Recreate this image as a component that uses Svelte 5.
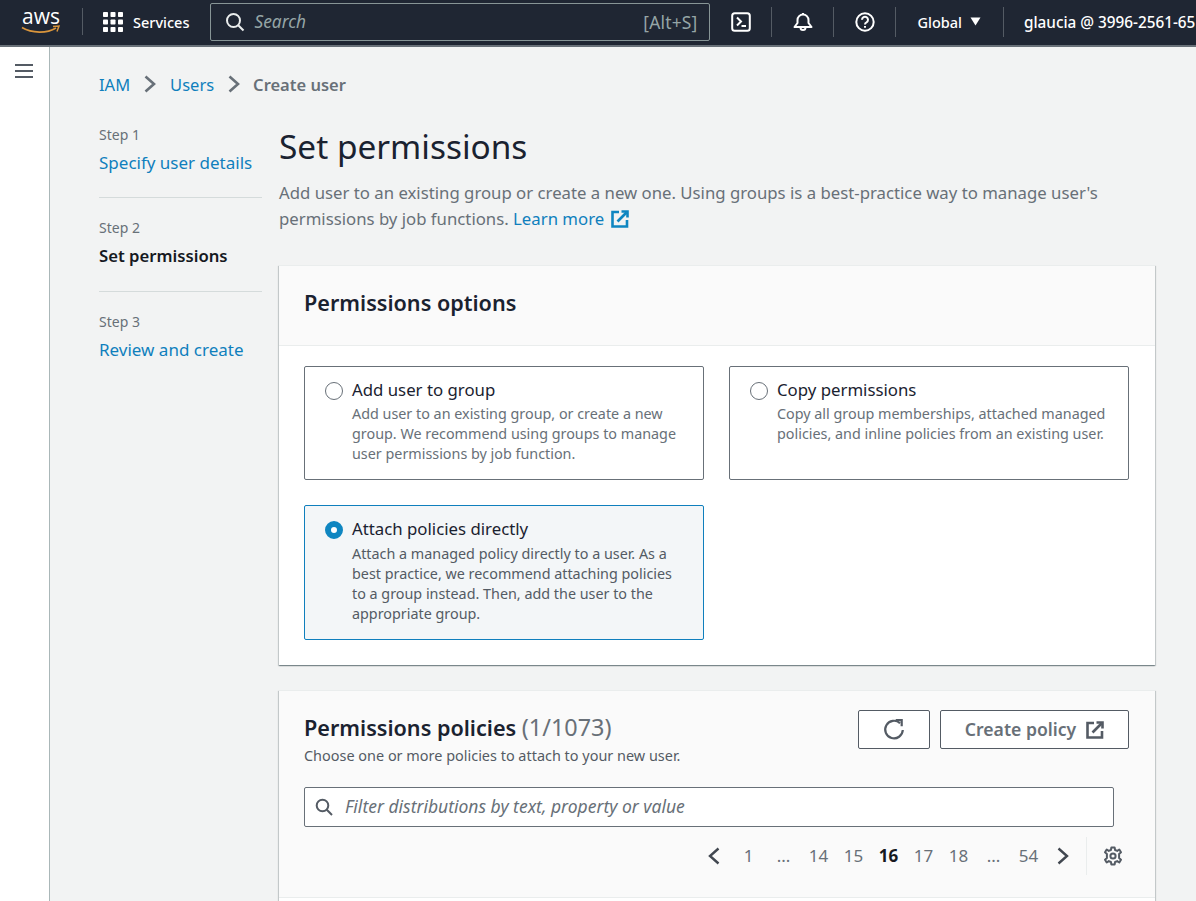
<script>
  const steps = [
    { label: "Step 1", name: "Specify user details", state: "link" },
    { label: "Step 2", name: "Set permissions", state: "current" },
    { label: "Step 3", name: "Review and create", state: "link" }
  ];

  const options = [
    {
      title: "Add user to group",
      text: "Add user to an existing group, or create a new group. We recommend using groups to manage user permissions by job function."
    },
    {
      title: "Copy permissions",
      text: "Copy all group memberships, attached managed policies, and inline policies from an existing user."
    },
    {
      title: "Attach policies directly",
      text: "Attach a managed policy directly to a user. As a best practice, we recommend attaching policies to a group instead. Then, add the user to the appropriate group.",
      selected: true
    }
  ];

  const pages = ["1", "...", "14", "15", "16", "17", "18", "...", "54"];
</script>

<div class="page">
  <header class="topbar">
    <div class="logo">
      <span class="logo-word">aws</span>
      <svg class="smile" width="40" height="10" viewBox="0 0 40 10">
        <path d="M1 2.5C11 8.5 26 8.5 35 3" fill="none" stroke="#d9953c" stroke-width="1.8" />
        <path d="M32 1.5 L38 1 L36 6.5" fill="none" stroke="#d9953c" stroke-width="1.5" />
      </svg>
    </div>
    <span class="sep first"></span>
    <svg class="grid-icon" width="20" height="20" viewBox="0 0 20 20" fill="#fff">
      {#each [0, 7.5, 15] as y}
        {#each [0, 7.5, 15] as x}
          <rect x={x} y={y} width="5" height="5" rx="0.8" />
        {/each}
      {/each}
    </svg>
    <span class="services">Services</span>

    <div class="search">
      <svg width="20" height="20" viewBox="0 0 20 20" fill="none" stroke="#eaeded" stroke-width="2">
        <circle cx="8.5" cy="8.5" r="6.5" />
        <path d="M13.2 13.2 L18.5 18.5" />
      </svg>
      <span class="search-text">Search</span>
      <span class="shortcut">[Alt+S]</span>
    </div>

    <svg class="tb-icon cloudshell" width="20" height="20" viewBox="0 0 20 20" fill="none" stroke="#fff" stroke-width="2">
      <rect x="1.2" y="1.2" width="17.6" height="17.6" rx="2.5" />
      <path d="M6 5.5 L10 9.5 L6 13.5" />
      <path d="M10.5 14 H15" />
    </svg>
    <span class="sep s1"></span>
    <svg class="tb-icon bell" width="20" height="20" viewBox="0 0 20 20" fill="none" stroke="#fff" stroke-width="2">
      <path d="M1.5 15 H18.5 L15.5 11 V8 A5.5 5.5 0 0 0 4.5 8 V11 Z" stroke-linejoin="round" />
      <path d="M10 1 V2.5" />
      <path d="M7.5 15.5 A2.5 2.5 0 0 0 12.5 15.5" />
    </svg>
    <span class="sep s2"></span>
    <svg class="tb-icon help" width="20" height="20" viewBox="0 0 20 20" fill="none" stroke="#fff" stroke-width="2">
      <circle cx="10" cy="10" r="8.7" />
      <path d="M7 7.8 A3 3 0 1 1 11.5 10.4 C10.4 11 10 11.4 10 12.6" />
      <path d="M10 14 V15.8" />
    </svg>
    <span class="sep s3"></span>
    <span class="region">Global</span>
    <svg class="caret" width="11" height="9" viewBox="0 0 11 9" fill="#fff"><path d="M0.5 0.5 H10.5 L5.5 8.5 Z" /></svg>
    <span class="sep s4"></span>
    <span class="account">glaucia @ 3996-2561-65</span>
  </header>

  <div class="body">
    <aside class="rail">
      <svg width="18" height="16" viewBox="0 0 18 16" stroke="#545b64" stroke-width="2">
        <path d="M0 2 H18 M0 8 H18 M0 14 H18" />
      </svg>
    </aside>

    <main class="main">
      <nav class="crumbs">
        <a href="#iam">IAM</a>
        <svg width="12" height="18" viewBox="0 0 12 18" fill="none" stroke="#687078" stroke-width="2.6"><path d="M1.5 1.5 L10 9 L1.5 16.5" /></svg>
        <a href="#users">Users</a>
        <svg width="12" height="18" viewBox="0 0 12 18" fill="none" stroke="#687078" stroke-width="2.6"><path d="M1.5 1.5 L10 9 L1.5 16.5" /></svg>
        <span class="crumb-current">Create user</span>
      </nav>

      <div class="columns">
        <ol class="steps">
          {#each steps as step}
            <li>
              <small>{step.label}</small>
              {#if step.state === "link"}
                <a href="#step">{step.name}</a>
              {:else}
                <strong>{step.name}</strong>
              {/if}
            </li>
          {/each}
        </ol>

        <section class="content">
          <h1>Set permissions</h1>
          <p class="lead">
            Add user to an existing group or create a new one. Using groups is a best-practice way to manage user's
            permissions by job functions. <a href="#learn">Learn more</a>
            <svg class="learn-icon" width="18" height="18" viewBox="0 0 18 18" fill="none" stroke="#0f86c1" stroke-width="2.6">
              <path d="M8 2 H1.5 V16.5 H16 V10" />
              <path d="M6.5 11.5 L15.5 2.5" />
              <path d="M10.5 1.5 H16.5 V7.5" />
            </svg>
          </p>

          <div class="panel options-panel">
            <div class="panel-head">
              <h2>Permissions options</h2>
            </div>
            <div class="tiles">
              {#each options as opt}
                <div class="tile" class:selected={opt.selected}>
                  <span class="radio"></span>
                  <div class="tile-text">
                    <div class="tile-title">{opt.title}</div>
                    <div class="tile-desc">{opt.text}</div>
                  </div>
                </div>
              {/each}
            </div>
          </div>

          <div class="panel policies-panel">
            <div class="policies-head">
              <div class="policies-top">
                <div class="policies-title">
                  <h2>Permissions policies <span class="count">(1/1073)</span></h2>
                  <p class="policies-sub">Choose one or more policies to attach to your new user.</p>
                </div>
                <div class="actions">
                  <button class="btn refresh" aria-label="Refresh">
                    <svg width="22" height="22" viewBox="0 0 20 20" fill="none" stroke="#545b64" stroke-width="2">
                      <path d="M15.5 3.8 A8 8 0 1 0 18 10" />
                      <path d="M11.5 1 H17 V6.5" />
                    </svg>
                  </button>
                  <button class="btn create">
                    <span class="btn-label">Create policy</span>
                    <svg width="18" height="18" viewBox="0 0 18 18" fill="none" stroke="#545b64" stroke-width="2.6">
                      <path d="M8 2 H1.5 V16.5 H16 V10" />
                      <path d="M6.5 11.5 L15.5 2.5" />
                      <path d="M10.5 1.5 H16.5 V7.5" />
                    </svg>
                  </button>
                </div>
              </div>

              <div class="filter">
                <svg width="18" height="18" viewBox="0 0 18 18" fill="none" stroke="#545b64" stroke-width="2">
                  <circle cx="7.5" cy="7.5" r="5.8" />
                  <path d="M11.8 11.8 L17 17" />
                </svg>
                <span class="filter-text">Filter distributions by text, property or value</span>
              </div>

              <div class="pager">
                <svg class="chev prev" width="14" height="18" viewBox="0 0 14 18" fill="none" stroke="#414750" stroke-width="2.4"><path d="M11.5 1.5 L3 9 L11.5 16.5" /></svg>
                {#each pages as p}
                  <span class="pg" class:now={p === "16"} class:dots={p === "..."}>{p}</span>
                {/each}
                <svg class="chev next" width="14" height="18" viewBox="0 0 14 18" fill="none" stroke="#414750" stroke-width="2.4"><path d="M2.5 1.5 L11 9 L2.5 16.5" /></svg>
                <span class="pager-sep"></span>
                <svg class="gear" width="20" height="20" viewBox="0 0 20 20" fill="none" stroke="#545b64" stroke-width="2">
                  <circle cx="10" cy="10" r="2.6" />
                  <path d="M8.4 1.5 H11.6 L12.1 4 L14.2 4.9 L16.3 3.5 L18 6.2 L16.1 7.9 L16.1 12.1 L18 13.8 L16.3 16.5 L14.2 15.1 L12.1 16 L11.6 18.5 H8.4 L7.9 16 L5.8 15.1 L3.7 16.5 L2 13.8 L3.9 12.1 L3.9 7.9 L2 6.2 L3.7 3.5 L5.8 4.9 L7.9 4 Z" stroke-linejoin="round" />
                </svg>
              </div>
            </div>
          </div>
        </section>
      </div>
    </main>
  </div>
</div>

<style>
  :global(body) {
    margin: 0;
    background: #f2f3f3;
  }

  .page {
    width: 1196px;
    height: 901px;
    overflow: hidden;
    font-family: "Noto Sans", "Open Sans", sans-serif;
    color: #16191f;
    display: flex;
    flex-direction: column;
  }

  a {
    color: #0f7fbd;
    text-decoration: none;
  }

  /* top bar */
  .topbar {
    flex: none;
    height: 43px;
    padding-bottom: 2px;
    background: #1f2633;
    border-bottom: 2px solid #687078;
    display: flex;
    align-items: center;
    white-space: nowrap;
    color: #fff;
    overflow: hidden;
    font-size: 14.5px;
  }

  .logo {
    flex: none;
    width: 40px;
    margin-left: 21px;
    display: flex;
    flex-direction: column;
    align-items: center;
    height: 34px;
  }

  .logo-word {
    font: 500 21px/22px "Open Sans", sans-serif;
  }

  .smile {
    margin-top: -2px;
  }

  .sep {
    flex: none;
    width: 1px;
    height: 30px;
    background: #545b64;
  }

  .first { margin-left: 21px; height: 27px; }
  .grid-icon { margin-left: 20px; flex: none; }
  .services { margin-left: 10px; font-weight: 500; }

  .search {
    flex: none;
    margin-left: 21px;
    width: 472px;
    height: 36px;
    border: 1px solid #879596;
    border-radius: 2px;
    display: flex;
    align-items: center;
    padding: 0 12px 0 14px;
  }

  .search-text {
    margin-left: 9px;
    font-style: italic;
    font-size: 17.3px;
    color: #95a5a6;
  }

  .shortcut {
    margin-left: auto;
    font-size: 17.4px;
    letter-spacing: 0.2px;
    color: #95a5a6;
  }

  .tb-icon { flex: none; }
  .cloudshell { margin-left: 21px; }
  .s1 { margin-left: 20px; }
  .bell { margin-left: 21px; }
  .s2 { margin-left: 20px; }
  .help { margin-left: 21px; }
  .s3 { margin-left: 20px; }
  .region { margin-left: 21px; font-weight: 500; }
  .caret { margin-left: 8px; flex: none; }
  .s4 { margin-left: 22px; }
  .account { margin-left: 20px; font-weight: 500; font-size: 15.3px; }

  .body {
    flex: 1;
    display: flex;
    min-height: 0;
  }

  .rail {
    flex: none;
    width: 50px;
    background: #fff;
    border-right: 1px solid #aab7b8;
    padding: 16px 0 0 15px;
    box-sizing: border-box;
  }

  .rail svg { display: block; }

  .main {
    flex: 1;
    padding: 24px 41px 0 49px;
    min-width: 0;
  }

  /* breadcrumb */
  .crumbs {
    display: flex;
    align-items: center;
    font-size: 16.5px;
    height: 26px;
  }

  .crumbs svg { margin: 0 14px; }
  .crumbs svg + a + svg { margin-right: 13px; }
  .crumb-current { color: #687078; font-weight: 600; }

  .columns {
    display: flex;
    margin-top: 27px;
  }

  /* wizard steps */
  .steps {
    flex: none;
    width: 163px;
    margin: 0 17px 0 0;
    padding: 0;
    list-style: none;
  }

  .steps li {
    height: 74px;
    box-sizing: border-box;
    border-bottom: 1px solid #d5dbdb;
    display: flex;
    flex-direction: column;
  }

  .steps li:last-child { border-bottom: 0; }
  .steps li + li { margin-top: 19px; }
  .steps li:nth-child(2) { height: 75px; }

  .steps small {
    font-size: 14px;
    line-height: 22px;
    color: #687078;
  }

  .steps a, .steps strong {
    font-size: 17px;
    line-height: 34px;
    white-space: nowrap;
  }

  .steps strong { font-weight: 600; font-size: 16.7px; }

  .content {
    flex: 1;
    min-width: 0;
  }

  h1 {
    margin: 0;
    font-size: 33.4px;
    font-weight: 400;
    line-height: 44px;
    padding-bottom: 2px;
    color: #1a2230;
  }

  .lead {
    margin: 10px 0 0;
    font-size: 16.75px;
    line-height: 26px;
    color: #687078;
    max-width: 830px;
  }

  .learn-icon { vertical-align: -3px; margin-left: 2px; }

  /* panels */
  .panel {
    background: #fff;
    border-top: 1px solid #eaeded;
    box-shadow: 0 1px 1px rgba(0, 28, 36, 0.3), 1px 1px 1px rgba(0, 28, 36, 0.15), -1px 1px 1px rgba(0, 28, 36, 0.15);
  }

  .options-panel { margin-top: 33px; height: 399px; }

  .panel-head {
    height: 80px;
    box-sizing: border-box;
    background: #fafafa;
    border-bottom: 1px solid #eaeded;
    padding: 0 25px 5px;
    display: flex;
    align-items: center;
  }

  h2 {
    margin: 0;
    font-size: 21.6px;
    font-weight: 600;
    line-height: 30px;
    color: #1a2230;
  }

  .tiles {
    display: grid;
    grid-template-columns: 400px 400px;
    gap: 25px;
    padding: 20px 25px;
    align-items: stretch;
  }

  .tile {
    border: 1px solid #687078;
    border-radius: 2px;
    padding: 11px 20px 15px 20px;
    display: flex;
    min-height: 114px;
    box-sizing: border-box;
  }

  .tile.selected {
    border-color: #0f7fbd;
    background: #f3f6f8;
    height: 135px;
  }

  .radio {
    flex: none;
    width: 18px;
    height: 18px;
    border: 1px solid #687078;
    border-radius: 50%;
    box-sizing: border-box;
    margin: 4px 9px 0 0;
    background: #fff;
  }

  .selected .radio {
    border: 6px solid #0f86c1;
    background: #fff;
  }

  .tile-title {
    font-size: 16.8px;
    line-height: 24px;
    color: #1a2230;
  }

  .tile-desc {
    font-size: 14.35px;
    line-height: 20px;
    color: #687078;
    margin-top: 2px;
  }

  .selected .tile-desc { color: #545b64; margin-top: 3px; }

  .policies-panel {
    margin-top: 25px;
    height: 300px;
  }

  .policies-head {
    height: 207px;
    box-sizing: border-box;
    background: #fafafa;
    border-bottom: 1px solid #eaeded;
    padding: 19px 26px 0 25px;
  }

  .policies-top {
    display: flex;
    justify-content: space-between;
    align-items: flex-start;
  }

  .policies-title { padding-top: 2px; }

  .count { font-size: 23.4px; font-weight: 400; color: #687078; }

  .policies-sub {
    margin: 3px 0 0;
    font-size: 14.45px;
    line-height: 20px;
    color: #545b64;
  }

  .actions {
    display: flex;
    gap: 10px;
  }

  .btn {
    height: 39px;
    background: #fff;
    border: 1px solid #545b64;
    border-radius: 2px;
    display: flex;
    align-items: center;
    justify-content: center;
    font: 600 17.6px "Noto Sans", sans-serif;
    color: #687078;
    padding: 0;
  }

  .btn-label { position: relative; top: -1px; }

  .refresh { width: 72px; }
  .create { width: 189px; gap: 10px; }

  .filter {
    margin-top: 21px;
    width: 810px;
    height: 40px;
    box-sizing: border-box;
    background: #fff;
    border: 1px solid #687078;
    border-radius: 2px;
    display: flex;
    align-items: center;
    padding-left: 10px;
    gap: 12px;
    font-size: 17.5px;
    font-style: italic;
    color: #687078;
  }

  .filter-text { padding-bottom: 2px; }

  .pager {
    display: flex;
    align-items: center;
    justify-content: flex-end;
    margin-top: 9px;
    height: 40px;
    padding-right: 6px;
    font-size: 17px;
    color: #687078;
  }

  .pg {
    width: 35px;
    text-align: center;
    padding-bottom: 2px;
  }

  .pg.now { font-weight: 700; color: #16191f; }

  .chev { flex: none; }
  .prev { margin-right: 10px; }
  .next { margin-left: 10px; }

  .pager-sep {
    width: 1px;
    height: 38px;
    background: #eaeded;
    margin: 0 16px;
  }

  .gear { flex: none; }
</style>
